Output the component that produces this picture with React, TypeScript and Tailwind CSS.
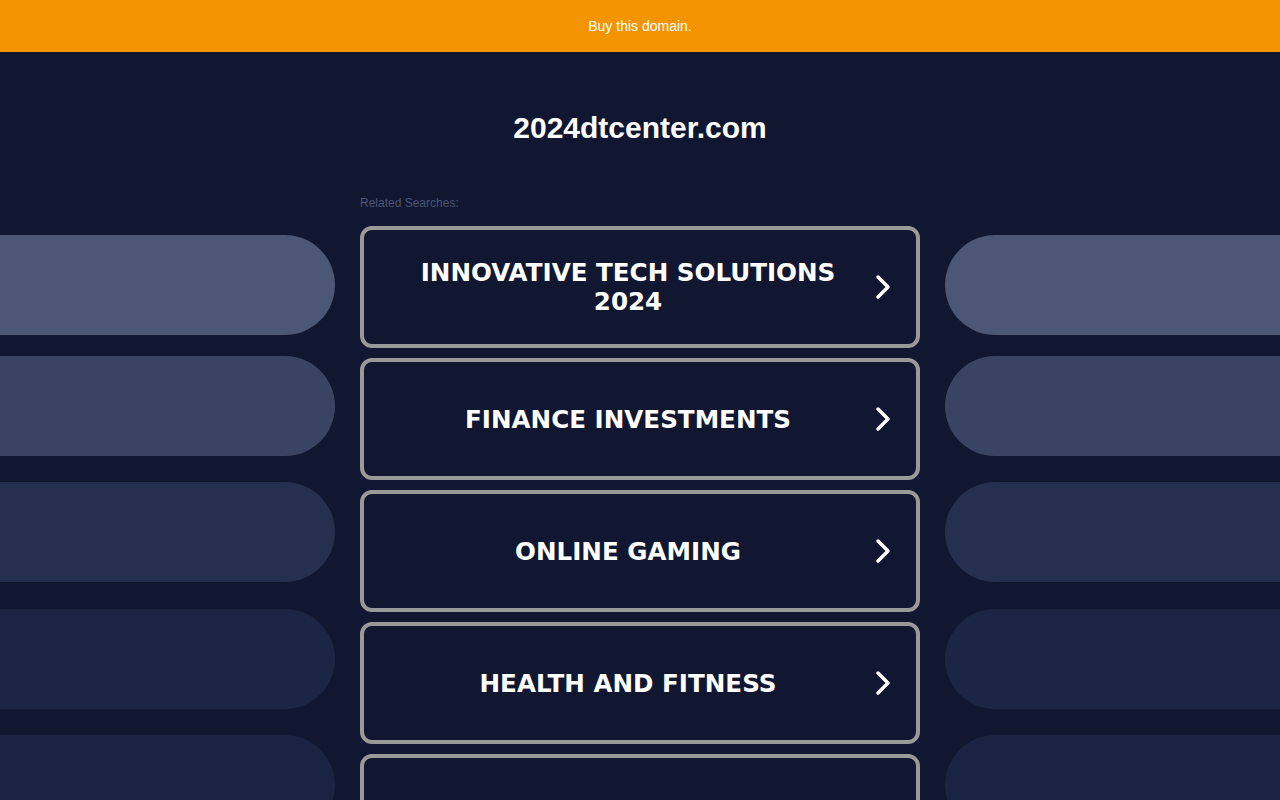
import { useState } from "react";

const searches = [
  "INNOVATIVE TECH SOLUTIONS 2024",
  "FINANCE INVESTMENTS",
  "ONLINE GAMING",
  "HEALTH AND FITNESS",
  "",
];

const pills = [
  { color: "bg-[#4c5675]", mt: "mt-[9px]" },
  { color: "bg-[#3a4361]", mt: "mt-[21px]" },
  { color: "bg-[#262f4d]", mt: "mt-[26px]" },
  { color: "bg-[#1d2545]", mt: "mt-[27px]" },
  { color: "bg-[#1b2343]", mt: "mt-[26px]" },
];

function Chevron() {
  return (
    <svg width="24" height="30" viewBox="0 0 24 30" className="shrink-0">
      <path d="M8 5 L18 15 L8 25" fill="none" stroke="white" strokeWidth="3.5" strokeLinecap="round" strokeLinejoin="round" />
    </svg>
  );
}

function SearchCard({ label }: { label: string }) {
  return (
    <a href="#" className="flex h-[122px] items-center rounded-[12px] border-4 border-[#999999] bg-[#111730] pl-[30px] pr-[22px]">
      <span className="flex-1 text-center text-[24.6px] font-bold leading-[29px] text-white" style={{ fontFamily: '"DejaVu Sans", Verdana, sans-serif' }}>
        {label}
      </span>
      {label !== "" && <span className="ml-2"><Chevron /></span>}
    </a>
  );
}

export default function App() {
  const [hover] = useState(false);

  return (
    <div className="h-[800px] overflow-hidden bg-[#111730]" style={{ fontFamily: '"Liberation Sans", Arial, sans-serif' }}>
      <div className="flex h-[52px] items-center justify-center bg-[#f39400] text-[14px] text-white">
        Buy this domain.
      </div>

      <h1 className="mt-[59px] text-center text-[30px] font-bold leading-[34px] text-white">2024dtcenter.com</h1>

      <div className="mt-[51px] flex">
        <div className="w-[335px] shrink-0 pt-[30px]">
          {pills.map((p, i) => (
            <div key={i} className={`h-[100px] rounded-r-[50px] ${p.color} ${p.mt}`} />
          ))}
        </div>

        <div className="mx-[25px] w-[560px] shrink-0">
          <div className={`text-[12px] leading-[14px] ${hover ? "text-white" : "text-[#4b5576]"}`}>Related Searches:</div>
          <div className="mt-[16px] flex flex-col gap-[10px]">
            {searches.map((s, i) => (
              <SearchCard key={i} label={s} />
            ))}
          </div>
        </div>

        <div className="w-[335px] shrink-0 pt-[30px]">
          {pills.map((p, i) => (
            <div key={i} className={`h-[100px] rounded-l-[50px] ${p.color} ${p.mt}`} />
          ))}
        </div>
      </div>
    </div>
  );
}
